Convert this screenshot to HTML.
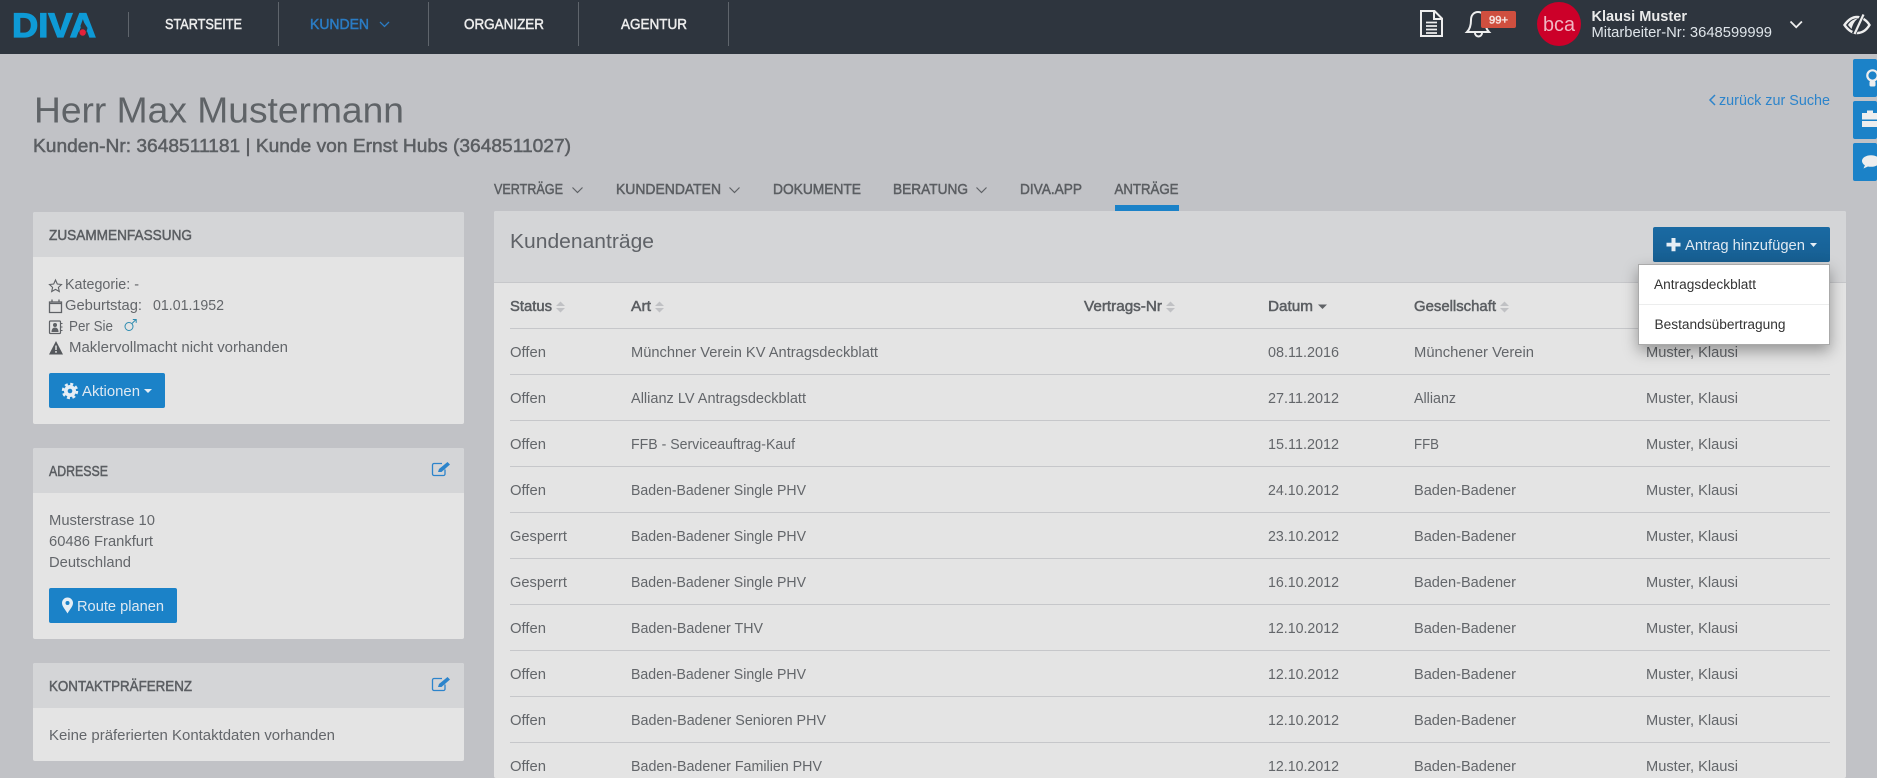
<!DOCTYPE html>
<html lang="de"><head><meta charset="utf-8"><title>Kundenanträge</title>
<style>
html,body{margin:0;padding:0;width:1877px;height:778px;overflow:hidden;background:#c1c2c6;font-family:"Liberation Sans",sans-serif}
.b{position:absolute}
.card{background:#e4e4e4;border-radius:2px}
.head{background:#d4d5d7;border-radius:2px 2px 0 0}
.btn{background:#1b82c8;border-radius:2px}
.l{background:#c6c7ca;height:1px;left:510px;width:1320px}
svg{position:absolute;left:0;top:0}
text{font-family:"Liberation Sans",sans-serif;font-size:14.5px;fill:#63666a}
.sb{stroke:currentColor;stroke-width:.5px}
.nav{font-size:14.5px;fill:#ececec;color:#ececec}
.h{fill:#5b5e62;color:#5b5e62}
.w{fill:#dfe9f2}
.d{fill:#333;font-size:13.5px}
</style></head><body>
<div class="b" style="left:0;top:0;width:1877px;height:54px;background:#2e353e"></div>
<div class="b" style="left:128px;top:12px;width:1px;height:25px;background:#5f656c"></div>
<div class="b" style="left:278px;top:2px;width:1px;height:44px;background:#5f656c"></div>
<div class="b" style="left:428px;top:2px;width:1px;height:44px;background:#5f656c"></div>
<div class="b" style="left:578px;top:2px;width:1px;height:44px;background:#5f656c"></div>
<div class="b" style="left:728px;top:2px;width:1px;height:44px;background:#5f656c"></div>
<div class="b" style="left:1537px;top:2px;width:44px;height:44px;border-radius:50%;background:#cc0029"></div>
<div class="b btn" style="left:1853px;top:59px;width:24px;height:38px"></div>
<div class="b btn" style="left:1853px;top:101px;width:24px;height:38px"></div>
<div class="b btn" style="left:1853px;top:143px;width:24px;height:38px"></div>
<div class="b" style="left:1115px;top:205px;width:64px;height:6px;background:#1b82c8"></div>

<div class="b card" style="left:33px;top:212px;width:431px;height:212px"></div>
<div class="b head" style="left:33px;top:212px;width:431px;height:45px"></div>
<div class="b btn" style="left:49px;top:373px;width:116px;height:35px"></div>
<div class="b card" style="left:33px;top:448px;width:431px;height:191px"></div>
<div class="b head" style="left:33px;top:448px;width:431px;height:45px"></div>
<div class="b btn" style="left:49px;top:588px;width:128px;height:35px"></div>
<div class="b card" style="left:33px;top:663px;width:431px;height:98px"></div>
<div class="b head" style="left:33px;top:663px;width:431px;height:45px"></div>

<div class="b card" style="left:494px;top:211px;width:1352px;height:567px"></div>
<div class="b head" style="left:494px;top:211px;width:1352px;height:71px;border-bottom:1px solid #c6c7ca"></div>
<div class="b l" style="top:328px"></div><div class="b l" style="top:374px"></div><div class="b l" style="top:420px"></div><div class="b l" style="top:466px"></div><div class="b l" style="top:512px"></div><div class="b l" style="top:558px"></div><div class="b l" style="top:604px"></div><div class="b l" style="top:650px"></div><div class="b l" style="top:696px"></div><div class="b l" style="top:742px"></div>
<div class="b" style="left:1653px;top:227px;width:177px;height:35px;border-radius:2px;background:linear-gradient(#1a6aa3,#175f92)"></div>

<svg width="1877" height="778" viewBox="0 0 1877 778" xmlns="http://www.w3.org/2000/svg">
<!-- logo -->
<text x="12" y="37" textLength="84" lengthAdjust="spacingAndGlyphs" style="font-size:34.500px;font-weight:700;fill:#0e9ad6;stroke:#0e9ad6;stroke-width:1.200px">DIVA</text>
<polygon points="77,37.800 85,37.800 87.500,28 83,21" fill="#2e353e"/><circle cx="82.700" cy="32.500" r="3.200" fill="#e5213a"/>

<text class="nav sb" x="165" y="29" textLength="77" lengthAdjust="spacingAndGlyphs">STARTSEITE</text>
<text class="sb" x="310" y="29" textLength="59" lengthAdjust="spacingAndGlyphs" style="fill:#2b7cc4;color:#2b7cc4">KUNDEN</text>
<path d="M380 22l4.500 4.500 4.500-4.500" fill="none" stroke="#2b7cc4" stroke-width="1.300"/>
<text class="nav sb" x="464" y="29" textLength="80" lengthAdjust="spacingAndGlyphs">ORGANIZER</text>
<text class="nav sb" x="621" y="29" textLength="66" lengthAdjust="spacingAndGlyphs">AGENTUR</text>

<!-- header right -->
<path d="M1421 11h13.500l7.500 7.500V36h-21zM1434 11v8h8" fill="none" stroke="#eee" stroke-width="2"/>
<path d="M1426 22.500h11M1426 26h11M1426 29.500h11M1426 33h11" stroke="#eee" stroke-width="1.800"/>
<path d="M1467 32c3-3 4-7 4-12 0-5 3-8 7-8s7 3 7 8c0 5 1 9 4 12zM1475 33a3.500 3.500 0 0 0 7 0" fill="none" stroke="#eee" stroke-width="2"/>
<rect x="1481" y="11" width="35" height="17" rx="2" fill="#cf4f3f"/>
<text class="sb" x="1489" y="23.500" textLength="19" lengthAdjust="spacingAndGlyphs" style="font-size:11px;fill:#f5e3e0;color:#f5e3e0">99+</text>
<text x="1543" y="31" textLength="32" lengthAdjust="spacingAndGlyphs" style="font-size:20px;fill:#f0b6c3">bca</text>
<text x="1591.500" y="21" textLength="95.500" lengthAdjust="spacingAndGlyphs" style="font-weight:700;font-size:14.500px;fill:#eaeaea">Klausi Muster</text>
<text x="1591.500" y="37" textLength="180.500" lengthAdjust="spacingAndGlyphs" style="fill:#dfe5ea">Mitarbeiter-Nr: 3648599999</text>
<path d="M1790.500 21.500l5.700 5.700 5.700-5.700" fill="none" stroke="#eee" stroke-width="1.800"/>
<path d="M1844.500 25c3.500-5 8-8 12.500-8s9.500 3 12.500 8c-3 5-7.500 8-12.500 8s-9-3-12.500-8z" fill="none" stroke="#eee" stroke-width="2.400"/>
<path d="M1848 25c2-3.500 5.500-6 10-6.500-3 2-5 5-6.500 10.500z" fill="#eee"/>
<path d="M1863 14.500l-9 19.500" stroke="#2e353e" stroke-width="4.500"/><path d="M1863.500 14.500l-9 19.500" stroke="#eee" stroke-width="2.200"/>

<!-- side icons -->
<circle cx="1872.500" cy="75.500" r="5.200" fill="none" stroke="#eee" stroke-width="2.200"/><rect x="1869.500" y="81" width="6" height="5.500" rx="1.500" fill="#eee"/>
<path d="M1862 113h5v-2.500h6V113h4v6.500h-15zM1862 121h15v6h-15z" fill="#eee"/>
<ellipse cx="1871" cy="161" rx="9" ry="5.800" fill="#eee"/><path d="M1865 165l-1.500 3.500 5.500-2.500z" fill="#eee"/>

<!-- title -->
<text x="34" y="122.500" textLength="370" lengthAdjust="spacingAndGlyphs" style="font-size:36.500px;fill:#5f6367">Herr Max Mustermann</text>
<text class="h sb" x="33" y="152" textLength="538" lengthAdjust="spacingAndGlyphs" style="font-size:18.500px">Kunden-Nr: 3648511181 | Kunde von Ernst Hubs (3648511027)</text>
<path d="M1715 95l-5 5 5 5" fill="none" stroke="#2c84cb" stroke-width="1.500"/>
<text x="1719" y="105" textLength="111" lengthAdjust="spacingAndGlyphs" style="fill:#2c84cb">zurück zur Suche</text>

<!-- tabs -->
<text class="h sb" x="494" y="194" textLength="69" lengthAdjust="spacingAndGlyphs">VERTRÄGE</text>
<path d="M572.500 187.500l5 5 5-5" fill="none" stroke="#5f6266" stroke-width="1.200"/>
<text class="h sb" x="616" y="194" textLength="105" lengthAdjust="spacingAndGlyphs">KUNDENDATEN</text>
<path d="M729.500 187.500l5 5 5-5" fill="none" stroke="#5f6266" stroke-width="1.200"/>
<text class="h sb" x="773" y="194" textLength="88" lengthAdjust="spacingAndGlyphs">DOKUMENTE</text>
<text class="h sb" x="893" y="194" textLength="75" lengthAdjust="spacingAndGlyphs">BERATUNG</text>
<path d="M976.500 187.500l5 5 5-5" fill="none" stroke="#5f6266" stroke-width="1.200"/>
<text class="h sb" x="1020" y="194" textLength="62" lengthAdjust="spacingAndGlyphs">DIVA.APP</text>
<text class="h sb" x="1114.500" y="194" textLength="64" lengthAdjust="spacingAndGlyphs">ANTRÄGE</text>

<!-- Zusammenfassung -->
<text class="h sb" x="49" y="240" textLength="143" lengthAdjust="spacingAndGlyphs">ZUSAMMENFASSUNG</text>
<polygon points="55.500,280 57.300,284 61.500,284.500 58.400,287.400 59.300,291.500 55.500,289.400 51.700,291.500 52.600,287.400 49.500,284.500 53.700,284" fill="none" stroke="#5f6266" stroke-width="1.100"/>
<text x="65" y="289" textLength="74" lengthAdjust="spacingAndGlyphs">Kategorie: -</text>
<path d="M49.500 302h12v10.500h-12zM49.500 303.500h12M52 299.500v3M59 299.500v3" fill="none" stroke="#5f6266" stroke-width="1.300"/>
<text x="65" y="310" textLength="77" lengthAdjust="spacingAndGlyphs">Geburtstag:</text>
<text x="153" y="310" textLength="71" lengthAdjust="spacingAndGlyphs">01.01.1952</text>
<rect x="49.500" y="321" width="11" height="12.500" rx="1" fill="none" stroke="#5f6266" stroke-width="1.200"/>
<circle cx="55" cy="325" r="2" fill="#5f6266"/><path d="M51.500 332c0-3 1.500-4.500 3.500-4.500s3.500 1.500 3.500 4.500z" fill="#5f6266"/>
<path d="M61 323.500h1.500M61 327h1.500M61 330.500h1.500" stroke="#5f6266"/>
<text x="69" y="331" textLength="44" lengthAdjust="spacingAndGlyphs">Per Sie</text>
<circle cx="129" cy="326.500" r="4" fill="none" stroke="#2e8cb0" stroke-width="1"/><path d="M132 323.500l4-4M132.800 319.500h3.400v3.400" fill="none" stroke="#2e8cb0" stroke-width="1"/>
<path d="M56 341l7 13.500H49z" fill="#55585c"/><path d="M56 345.500v4.500M56 351v1.700" stroke="#e4e4e4" stroke-width="1.500"/>
<text x="69" y="352" textLength="219" lengthAdjust="spacingAndGlyphs">Maklervollmacht nicht vorhanden</text>
<circle cx="70" cy="391" r="6" fill="#e6eef5"/><circle cx="70" cy="391" r="7" fill="none" stroke="#e6eef5" stroke-width="2.400" stroke-dasharray="3 2.500"/><circle cx="70" cy="391" r="2.300" fill="#1b82c8"/>
<text class="w" x="82" y="396" textLength="58" lengthAdjust="spacingAndGlyphs">Aktionen</text>
<polygon points="144,389 152,389 148,393" fill="#e6eef5"/>

<!-- Adresse -->
<text class="h sb" x="49" y="476" textLength="59" lengthAdjust="spacingAndGlyphs">ADRESSE</text>
<g fill="none" stroke="#2c84cb" stroke-width="1.300"><path d="M445 469.500v4.500a1.500 1.500 0 0 1-1.500 1.500h-9.500a1.500 1.500 0 0 1-1.500-1.500v-9a1.500 1.500 0 0 1 1.500-1.500h8"/></g><path d="M438 472l1-3 8.500-7 2.500 2.500-8.500 7.500z" fill="#2c84cb"/>
<text x="49" y="525" textLength="106" lengthAdjust="spacingAndGlyphs">Musterstrase 10</text>
<text x="49" y="546" textLength="104" lengthAdjust="spacingAndGlyphs">60486 Frankfurt</text>
<text x="49" y="567" textLength="82" lengthAdjust="spacingAndGlyphs">Deutschland</text>
<path d="M67.500 597.500a5.500 5.500 0 0 1 5.500 5.500c0 3.500-3 6-5.500 10.500-2.500-4.500-5.500-7-5.500-10.500a5.500 5.500 0 0 1 5.500-5.500z" fill="#e6eef5"/><circle cx="67.500" cy="603" r="2" fill="#1b82c8"/>
<text class="w" x="77" y="611" textLength="87" lengthAdjust="spacingAndGlyphs">Route planen</text>

<!-- Kontakt -->
<text class="h sb" x="49" y="691" textLength="143" lengthAdjust="spacingAndGlyphs">KONTAKTPRÄFERENZ</text>
<g fill="none" stroke="#2c84cb" stroke-width="1.300"><path d="M445 684.500v4.500a1.500 1.500 0 0 1-1.500 1.500h-9.500a1.500 1.500 0 0 1-1.500-1.500v-9a1.500 1.500 0 0 1 1.500-1.500h8"/></g><path d="M438 687l1-3 8.500-7 2.500 2.500-8.500 7.500z" fill="#2c84cb"/>
<text x="49" y="740" textLength="286" lengthAdjust="spacingAndGlyphs">Keine präferierten Kontaktdaten vorhanden</text>

<!-- panel -->
<text x="510" y="248" textLength="144" lengthAdjust="spacingAndGlyphs" style="font-size:20.500px;fill:#5f6267">Kundenanträge</text>
<path d="M1671.500 238h4v4.700h5v3.800h-5v4.700h-4v-4.700h-5v-3.800h5z" fill="#e6eef5"/>
<text class="w" x="1685" y="250" textLength="120" lengthAdjust="spacingAndGlyphs">Antrag hinzufügen</text>
<polygon points="1810,243 1817,243 1813.500,247" fill="#e6eef5"/>

<text class="h sb" x="510" y="311" textLength="42" lengthAdjust="spacingAndGlyphs">Status</text>
<path d="M560.500 301.500l4.500 4.500h-9zM560.500 312.500l4.500-4.500h-9z" fill="#c0c1c4"/>
<text class="h sb" x="631" y="311" textLength="20" lengthAdjust="spacingAndGlyphs">Art</text>
<path d="M659.500 301.500l4.500 4.500h-9zM659.500 312.500l4.500-4.500h-9z" fill="#c0c1c4"/>
<text class="h sb" x="1084" y="311" textLength="78" lengthAdjust="spacingAndGlyphs">Vertrags-Nr</text>
<path d="M1170.500 301.500l4.500 4.500h-9zM1170.500 312.500l4.500-4.500h-9z" fill="#c0c1c4"/>
<text class="h sb" x="1268" y="311" textLength="45" lengthAdjust="spacingAndGlyphs">Datum</text>
<polygon points="1318,304.500 1327,304.500 1322.500,309" fill="#5f6266"/>
<text class="h sb" x="1414" y="311" textLength="82" lengthAdjust="spacingAndGlyphs">Gesellschaft</text>
<path d="M1504.500 301.500l4.500 4.500h-9zM1504.500 312.500l4.500-4.500h-9z" fill="#c0c1c4"/>

<g id="rows">
<text x="510" y="357" textLength="36" lengthAdjust="spacingAndGlyphs">Offen</text><text x="631" y="357" textLength="247" lengthAdjust="spacingAndGlyphs">Münchner Verein KV Antragsdeckblatt</text><text x="1268" y="357" textLength="71" lengthAdjust="spacingAndGlyphs">08.11.2016</text><text x="1414" y="357" textLength="120" lengthAdjust="spacingAndGlyphs">Münchener Verein</text><text x="1646" y="357" textLength="92" lengthAdjust="spacingAndGlyphs">Muster, Klausi</text>
<text x="510" y="403" textLength="36" lengthAdjust="spacingAndGlyphs">Offen</text><text x="631" y="403" textLength="175" lengthAdjust="spacingAndGlyphs">Allianz LV Antragsdeckblatt</text><text x="1268" y="403" textLength="71" lengthAdjust="spacingAndGlyphs">27.11.2012</text><text x="1414" y="403" textLength="42" lengthAdjust="spacingAndGlyphs">Allianz</text><text x="1646" y="403" textLength="92" lengthAdjust="spacingAndGlyphs">Muster, Klausi</text>
<text x="510" y="449" textLength="36" lengthAdjust="spacingAndGlyphs">Offen</text><text x="631" y="449" textLength="164" lengthAdjust="spacingAndGlyphs">FFB - Serviceauftrag-Kauf</text><text x="1268" y="449" textLength="71" lengthAdjust="spacingAndGlyphs">15.11.2012</text><text x="1414" y="449" textLength="25" lengthAdjust="spacingAndGlyphs">FFB</text><text x="1646" y="449" textLength="92" lengthAdjust="spacingAndGlyphs">Muster, Klausi</text>
<text x="510" y="495" textLength="36" lengthAdjust="spacingAndGlyphs">Offen</text><text x="631" y="495" textLength="175" lengthAdjust="spacingAndGlyphs">Baden-Badener Single PHV</text><text x="1268" y="495" textLength="71" lengthAdjust="spacingAndGlyphs">24.10.2012</text><text x="1414" y="495" textLength="102" lengthAdjust="spacingAndGlyphs">Baden-Badener</text><text x="1646" y="495" textLength="92" lengthAdjust="spacingAndGlyphs">Muster, Klausi</text>
<text x="510" y="541" textLength="57" lengthAdjust="spacingAndGlyphs">Gesperrt</text><text x="631" y="541" textLength="175" lengthAdjust="spacingAndGlyphs">Baden-Badener Single PHV</text><text x="1268" y="541" textLength="71" lengthAdjust="spacingAndGlyphs">23.10.2012</text><text x="1414" y="541" textLength="102" lengthAdjust="spacingAndGlyphs">Baden-Badener</text><text x="1646" y="541" textLength="92" lengthAdjust="spacingAndGlyphs">Muster, Klausi</text>
<text x="510" y="587" textLength="57" lengthAdjust="spacingAndGlyphs">Gesperrt</text><text x="631" y="587" textLength="175" lengthAdjust="spacingAndGlyphs">Baden-Badener Single PHV</text><text x="1268" y="587" textLength="71" lengthAdjust="spacingAndGlyphs">16.10.2012</text><text x="1414" y="587" textLength="102" lengthAdjust="spacingAndGlyphs">Baden-Badener</text><text x="1646" y="587" textLength="92" lengthAdjust="spacingAndGlyphs">Muster, Klausi</text>
<text x="510" y="633" textLength="36" lengthAdjust="spacingAndGlyphs">Offen</text><text x="631" y="633" textLength="132" lengthAdjust="spacingAndGlyphs">Baden-Badener THV</text><text x="1268" y="633" textLength="71" lengthAdjust="spacingAndGlyphs">12.10.2012</text><text x="1414" y="633" textLength="102" lengthAdjust="spacingAndGlyphs">Baden-Badener</text><text x="1646" y="633" textLength="92" lengthAdjust="spacingAndGlyphs">Muster, Klausi</text>
<text x="510" y="679" textLength="36" lengthAdjust="spacingAndGlyphs">Offen</text><text x="631" y="679" textLength="175" lengthAdjust="spacingAndGlyphs">Baden-Badener Single PHV</text><text x="1268" y="679" textLength="71" lengthAdjust="spacingAndGlyphs">12.10.2012</text><text x="1414" y="679" textLength="102" lengthAdjust="spacingAndGlyphs">Baden-Badener</text><text x="1646" y="679" textLength="92" lengthAdjust="spacingAndGlyphs">Muster, Klausi</text>
<text x="510" y="725" textLength="36" lengthAdjust="spacingAndGlyphs">Offen</text><text x="631" y="725" textLength="195" lengthAdjust="spacingAndGlyphs">Baden-Badener Senioren PHV</text><text x="1268" y="725" textLength="71" lengthAdjust="spacingAndGlyphs">12.10.2012</text><text x="1414" y="725" textLength="102" lengthAdjust="spacingAndGlyphs">Baden-Badener</text><text x="1646" y="725" textLength="92" lengthAdjust="spacingAndGlyphs">Muster, Klausi</text>
<text x="510" y="771" textLength="36" lengthAdjust="spacingAndGlyphs">Offen</text><text x="631" y="771" textLength="191" lengthAdjust="spacingAndGlyphs">Baden-Badener Familien PHV</text><text x="1268" y="771" textLength="71" lengthAdjust="spacingAndGlyphs">12.10.2012</text><text x="1414" y="771" textLength="102" lengthAdjust="spacingAndGlyphs">Baden-Badener</text><text x="1646" y="771" textLength="92" lengthAdjust="spacingAndGlyphs">Muster, Klausi</text>
</g>
</svg>

<!-- dropdown -->
<div class="b" style="left:1638px;top:264px;width:190px;height:79px;background:#fff;border:1px solid #aaa;box-shadow:0 6px 14px rgba(0,0,0,.35)"><div style="position:absolute;left:0;right:0;top:39px;height:1px;background:#eceded"></div></div>
<svg width="1877" height="778" viewBox="0 0 1877 778" xmlns="http://www.w3.org/2000/svg">
<text class="d" x="1654" y="289" textLength="102" lengthAdjust="spacingAndGlyphs">Antragsdeckblatt</text>
<text class="d" x="1654.500" y="329" textLength="131" lengthAdjust="spacingAndGlyphs">Bestandsübertragung</text>
</svg>
</body></html>
